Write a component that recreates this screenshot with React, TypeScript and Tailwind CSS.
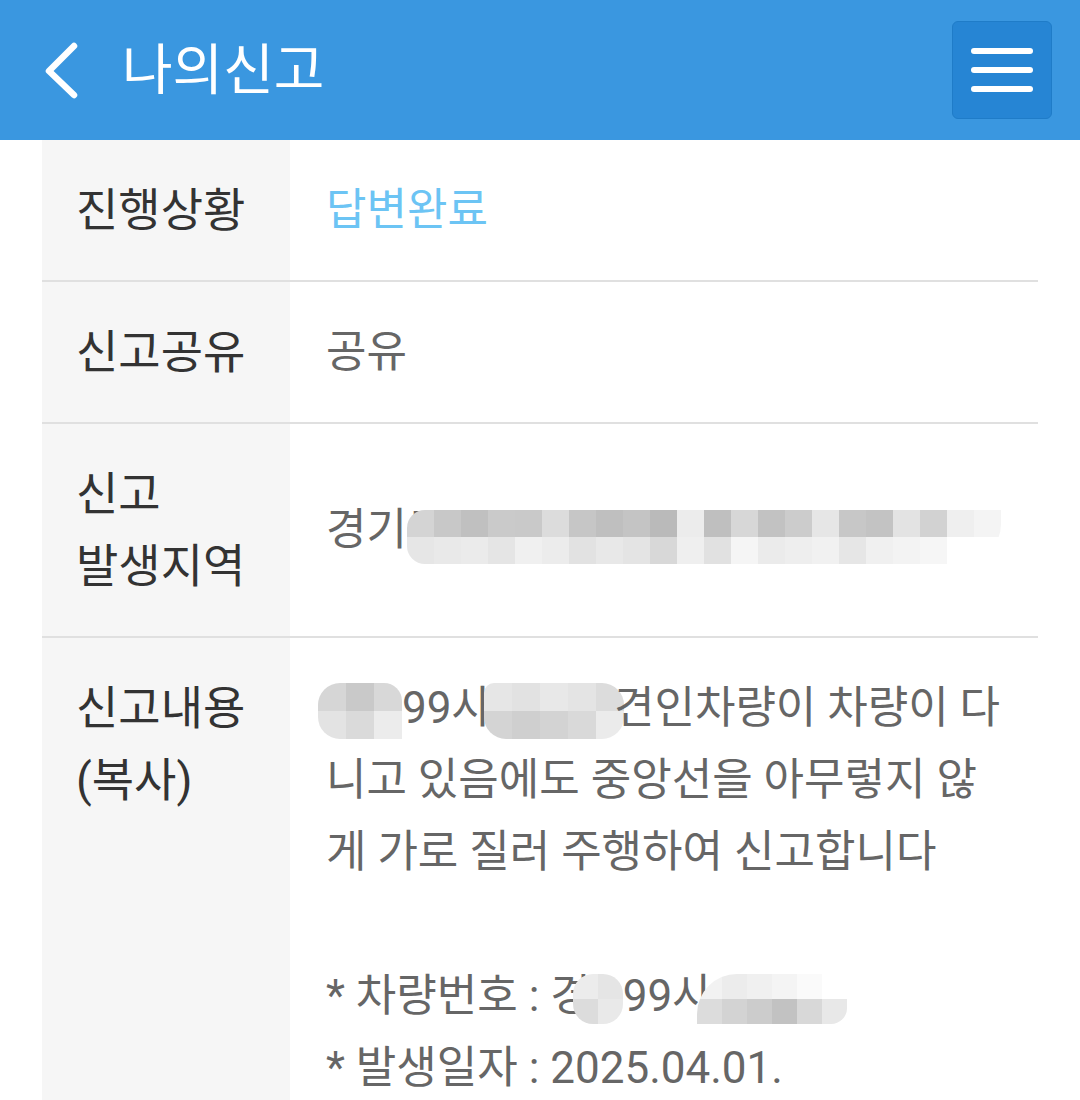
import React from 'react';

const FONT = { fontFamily: 'Roboto, "Noto Sans CJK KR", sans-serif' };

// mosaic used to hide personal data in the screenshot
function Mosaic({ rows, cell, className = '' }: { rows: string[][]; cell: number; className?: string }) {
  return (
    <span className={`inline-flex flex-col overflow-hidden align-middle ${className}`}>
      {rows.map((r, i) => (
        <span key={i} className="flex">
          {r.map((c, j) => (
            <span key={j} className="block" style={{ width: cell, height: cell, background: c }} />
          ))}
        </span>
      ))}
    </span>
  );
}

const addrTop = ['#d4d4d4','#c8c8c8','#c0c0c0','#cacaca','#c9c9c9','#dcdcdc','#c6c6c6','#bfbfbf','#c4c4c4','#bababa','#ececec','#bfbfbf','#d7d7d7','#c2c2c2','#cccccc','#e6e6e6','#c7c7c7','#c3c3c3','#e3e3e3','#d2d2d2','#efefef','#f4f4f4'];
const addrBot = ['#e6e6e6','#e9e9e9','#ebebeb','#e5e5e5','#f0f0f0','#ececec','#e2e2e2','#e8e8e8','#e4e4e4','#d8d8d8','#efefef','#e1e1e1','#f5f5f5','#ebebeb','#eeeeee','#f1f1f1','#e6e6e6','#f0f0f0','#f3f3f3','#f6f6f6','#ffffff','#ffffff'];

function Row({ label, children, top = false }: { label: React.ReactNode; children: React.ReactNode; top?: boolean }) {
  return (
    <div className="flex border-b-2 border-[#e0e0e0]">
      <div
        className={`w-[248px] shrink-0 bg-[#f6f6f6] pl-[34px] py-[34px] flex ${top ? 'items-start' : 'items-center'} text-[46px] leading-[72px] text-[#333333]`}
      >
        <div>{label}</div>
      </div>
      <div className={`flex-1 pl-[36px] pr-[8px] py-[34px] flex ${top ? 'items-start' : 'items-center'} text-[44px] leading-[72px] text-[#666666]`}>
        <div>{children}</div>
      </div>
    </div>
  );
}

export default function App() {
  return (
    <div className="w-[1080px] h-[1100px] overflow-hidden bg-white" style={FONT}>
      <header className="h-[140px] bg-[#3a97e0] flex items-center pl-[44px] pr-[28px]">
        <svg width="40" height="60" viewBox="0 0 40 60" className="shrink-0">
          <polyline points="30,6 5,31 30,55" fill="none" stroke="#ffffff" strokeWidth="6.5" strokeLinecap="round" strokeLinejoin="round" />
        </svg>
        <h1 className="ml-[38px] text-[55px] leading-none text-white font-normal">나의신고</h1>
        <button
          type="button"
          className="ml-auto w-[100px] h-[98px] rounded-[6px] bg-[#2685d4] border border-[#1f7cc8] flex flex-col items-center justify-center gap-[13px]"
        >
          <span className="block w-[62px] h-[6px] rounded-full bg-white" />
          <span className="block w-[62px] h-[6px] rounded-full bg-white" />
          <span className="block w-[62px] h-[6px] rounded-full bg-white" />
        </button>
      </header>

      <div className="mx-[42px]">
        <Row label="진행상황">
          <span className="text-[#6cc4f4]">답변완료</span>
        </Row>
        <Row label="신고공유">공유</Row>
        <Row
          label={
            <>
              신고
              <br />
              발생지역
            </>
          }
        >
          <span className="inline-flex items-center">
            경기도
            <Mosaic
              className="-ml-[40px] mt-[14px] rounded-l-[18px] rounded-br-[40px]"
              cell={27}
              rows={[addrTop, addrBot]}
            />
          </span>
        </Row>
        <Row label={<>신고내용<br />(복사)</>} top>
          <div className="whitespace-nowrap">
            <Mosaic
              className="-ml-[8px] rounded-l-[22px] rounded-tr-[18px]"
              cell={28}
              rows={[['#d6d6d6','#c9c9c9','#d8d8d8'], ['#e3e3e3','#dadada','#ececec']]}
            />
            99사
            <Mosaic
              className="-ml-[8px] -mr-[10px] rounded-[22px] rounded-tl-[10px]"
              cell={28}
              rows={[['#e6e6e6','#e2e2e2','#e8e8e8','#e4e4e4','#dcdcdc'], ['#d4d4d4','#cfcfcf','#d3d3d3','#d9d9d9','#ebebeb']]}
            />
            견인차량이 차량이 다
            <br />
            니고 있음에도 중앙선을 아무렇지 않
            <br />
            게 가로 질러 주행하여 신고합니다
            <br />
            <br />* 차량번호 : 경
            <Mosaic
              className="-ml-[18px] rounded-[20px]"
              cell={25}
              rows={[['#ececec','#e5e5e5'], ['#dcdcdc','#e9e9e9']]}
            />
            99사
            <Mosaic
              className="-ml-[16px] rounded-tl-[40px] rounded-br-[16px]"
              cell={25}
              rows={[['#f2f2f2','#ececec','#f0f0f0','#f4f4f4','#fafafa','#ffffff'], ['#dcdcdc','#d3d3d3','#cccccc','#c2c2c2','#d8d8d8','#e8e8e8']]}
            />
            <br />* 발생일자 : 2025.04.01.
          </div>
        </Row>
      </div>
    </div>
  );
}
